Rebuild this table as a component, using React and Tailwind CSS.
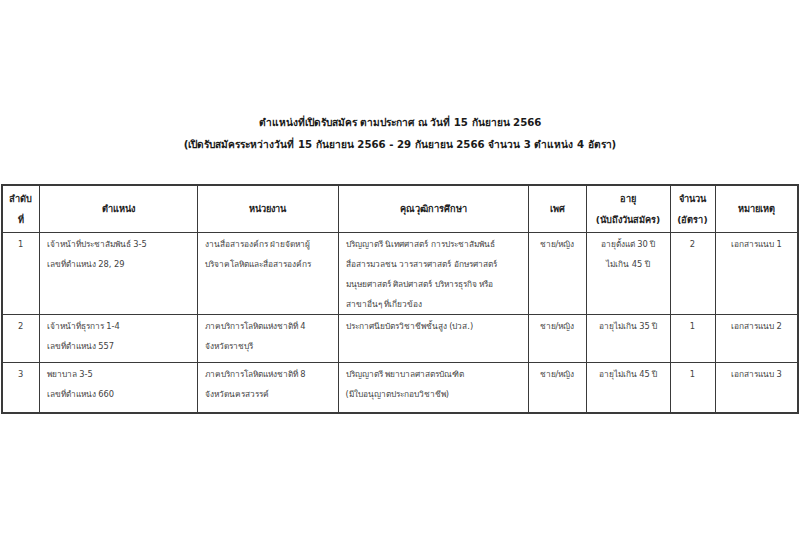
import React from "react";

const rows = [
  {
    no: "1",
    pos: ["เจ้าหน้าที่ประชาสัมพันธ์ 3-5", "เลขที่ตำแหน่ง 28, 29"],
    unit: ["งานสื่อสารองค์กร ฝ่ายจัดหาผู้", "บริจาคโลหิตและสื่อสารองค์กร"],
    edu: [
      "ปริญญาตรี นิเทศศาสตร์ การประชาสัมพันธ์",
      "สื่อสารมวลชน วารสารศาสตร์ อักษรศาสตร์",
      "มนุษยศาสตร์ ศิลปศาสตร์ บริหารธุรกิจ หรือ",
      "สาขาอื่นๆ ที่เกี่ยวข้อง",
    ],
    sex: "ชาย/หญิง",
    age: ["อายุตั้งแต่ 30 ปี", "ไม่เกิน 45 ปี"],
    n: "2",
    note: "เอกสารแนบ 1",
    h: "h-[80px]",
  },
  {
    no: "2",
    pos: ["เจ้าหน้าที่ธุรการ 1-4", "เลขที่ตำแหน่ง 557"],
    unit: ["ภาคบริการโลหิตแห่งชาติที่ 4", "จังหวัดราชบุรี"],
    edu: ["ประกาศนียบัตรวิชาชีพชั้นสูง (ปวส.)"],
    sex: "ชาย/หญิง",
    age: ["อายุไม่เกิน 35 ปี"],
    n: "1",
    note: "เอกสารแนบ 2",
    h: "h-[48px]",
  },
  {
    no: "3",
    pos: ["พยาบาล 3-5", "เลขที่ตำแหน่ง 660"],
    unit: ["ภาคบริการโลหิตแห่งชาติที่ 8", "จังหวัดนครสวรรค์"],
    edu: ["ปริญญาตรี พยาบาลศาสตรบัณฑิต", "(มีใบอนุญาตประกอบวิชาชีพ)"],
    sex: "ชาย/หญิง",
    age: ["อายุไม่เกิน 45 ปี"],
    n: "1",
    note: "เอกสารแนบ 3",
    h: "h-[51px]",
  },
];

function Lines({ items }) {
  return items.map((t, i) => <div key={i}>{t}</div>);
}

export default function App() {
  const font = { fontFamily: 'Tahoma, "DejaVu Sans", "Noto Sans", sans-serif' };
  const th = "border border-[#3a3a3a] text-center align-middle font-bold text-[9.2px] leading-[21px] text-[#222] whitespace-nowrap overflow-hidden";
  const td = "border border-[#3a3a3a] align-top text-[8.3px] leading-[20px] text-[#444] pt-[1px] whitespace-nowrap overflow-hidden";
  return (
    <div className="w-[800px] h-[543px] bg-white overflow-hidden" style={font}>
      <div className="pt-[112px] text-center font-bold text-[10.2px] leading-[22px] text-[#1a1a1a] whitespace-nowrap">
        <div>ตำแหน่งที่เปิดรับสมัคร ตามประกาศ ณ วันที่ 15 กันยายน 2566</div>
        <div>(เปิดรับสมัครระหว่างวันที่ 15 กันยายน 2566 - 29 กันยายน 2566 จำนวน 3 ตำแหน่ง 4 อัตรา)</div>
      </div>
      <table className="mt-[28px] ml-[1px] w-[798px] table-fixed border-collapse border-2 border-[#3a3a3a]">
        <colgroup>
          <col className="w-[37px]" />
          <col className="w-[158px]" />
          <col className="w-[141px]" />
          <col className="w-[190px]" />
          <col className="w-[58px]" />
          <col className="w-[84px]" />
          <col className="w-[45px]" />
          <col />
        </colgroup>
        <thead>
          <tr className="h-[47px]">
            <th className={th}>
              <div>ลำดับ</div>
              <div>ที่</div>
            </th>
            <th className={th}>ตำแหน่ง</th>
            <th className={th}>หน่วยงาน</th>
            <th className={th}>คุณวุฒิการศึกษา</th>
            <th className={th}>เพศ</th>
            <th className={th}>
              <div>อายุ</div>
              <div>(นับถึงวันสมัคร)</div>
            </th>
            <th className={th}>
              <div>จำนวน</div>
              <div>(อัตรา)</div>
            </th>
            <th className={th}>หมายเหตุ</th>
          </tr>
        </thead>
        <tbody>
          {rows.map((r) => (
            <tr key={r.no} className={r.h}>
              <td className={`${td} text-center`}>{r.no}</td>
              <td className={`${td} px-[7px]`}>
                <Lines items={r.pos} />
              </td>
              <td className={`${td} px-[7px]`}>
                <Lines items={r.unit} />
              </td>
              <td className={`${td} px-[7px]`}>
                <Lines items={r.edu} />
              </td>
              <td className={`${td} text-center`}>{r.sex}</td>
              <td className={`${td} text-center`}>
                <Lines items={r.age} />
              </td>
              <td className={`${td} text-center`}>{r.n}</td>
              <td className={`${td} text-center`}>{r.note}</td>
            </tr>
          ))}
        </tbody>
      </table>
    </div>
  );
}
